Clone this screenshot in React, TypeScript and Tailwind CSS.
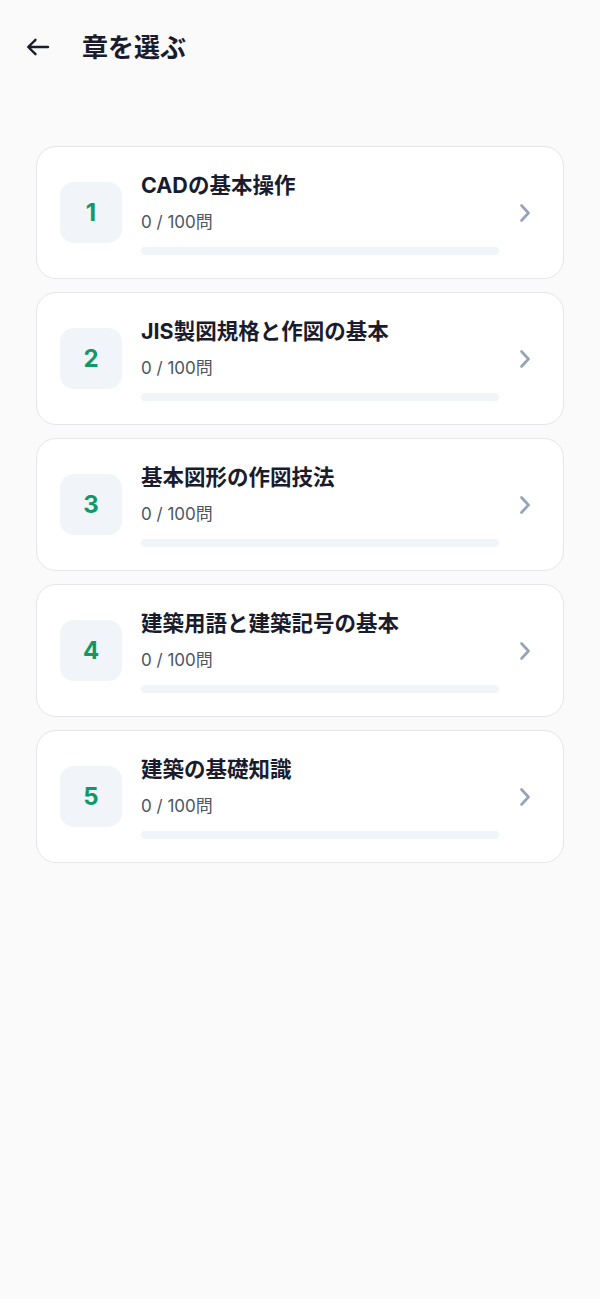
const chapters = [
  { no: 1, title: "CADの基本操作" },
  { no: 2, title: "JIS製図規格と作図の基本" },
  { no: 3, title: "基本図形の作図技法" },
  { no: 4, title: "建築用語と建築記号の基本" },
  { no: 5, title: "建築の基礎知識" },
];

const ChapterCard = ({ no, title }: { no: number; title: string }) => (
  <button className="flex h-[133px] w-full items-center rounded-[20px] border border-[#e4e6ea] bg-white pl-[23px] pr-[32px] text-left">
    <div className="flex h-[61px] w-[62px] shrink-0 items-center justify-center rounded-[14px] bg-[#f1f5f9] text-[24px] font-bold text-[#109866]">
      {no}
    </div>
    <div className="ml-[19px] flex flex-1 flex-col">
      <div className="text-[21.5px] font-bold leading-[28px] text-[#1a1c2e]">{title}</div>
      <div className="mt-[11px] text-[17px] leading-[24px] text-[#4b5563]">0 / 100問</div>
      <div className="mt-[13px] h-[8px] w-full rounded-full bg-[#f1f5f9]">
        <div className="h-full rounded-full bg-[#109866]" style={{ width: "0%" }} />
      </div>
    </div>
    <svg width="12" height="20" viewBox="0 0 12 20" className="ml-[20px] shrink-0" fill="none">
      <path d="M2.5 2.5 L9.5 10 L2.5 17.5" stroke="#94a3b8" strokeWidth="2.6" strokeLinecap="round" strokeLinejoin="round" />
    </svg>
  </button>
);

export default function App() {
  return (
    <div
      className="min-h-[1299px] bg-[#fafafa]"
      style={{ fontFamily: 'Inter, "Noto Sans CJK JP", sans-serif' }}
    >
      <header className="flex h-[94px] items-center px-[26px]">
        <svg width="24" height="18" viewBox="0 0 24 18" fill="none">
          <path d="M22 9 H2.5 M9.5 1.8 L2.2 9 L9.5 16.2" stroke="#1a1c2e" strokeWidth="2.4" strokeLinecap="round" strokeLinejoin="round" />
        </svg>
        <h1 className="ml-[32px] text-[26px] font-bold text-[#1a1c2e]">章を選ぶ</h1>
      </header>
      <main className="mt-[52px] flex flex-col gap-[13px] px-[36px]">
        {chapters.map((c) => (
          <ChapterCard key={c.no} {...c} />
        ))}
      </main>
    </div>
  );
}
